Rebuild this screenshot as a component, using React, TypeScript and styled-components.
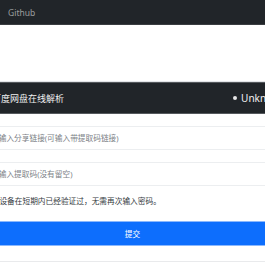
import React from "react";
import styled, { createGlobalStyle } from "styled-components";

const Global = createGlobalStyle`
  html, body { margin: 0; padding: 0; background: #fff; overflow: hidden; }
  body { font-family: "Noto Sans", "Noto Sans CJK SC", sans-serif; color: #212529; }
  * { box-sizing: border-box; }
`;

const Navbar = styled.nav`
  height: 25px;
  background: #212529;
  border-bottom: 1px solid #3a3d41;
  display: flex;
  align-items: center;
  padding: 0 8px;
`;

const NavLink = styled.a`
  color: rgba(255, 255, 255, 0.55);
  font-size: 8.5px;
  text-decoration: none;
`;

const Main = styled.main`
  padding-top: 56px;
`;

const Card = styled.section`
  width: calc(100% + 50px);
  margin-left: -25px;
  border: 1px solid #e3e5e8;
  border-radius: 4px;
`;

const CardHeader = styled.header`
  height: 32px;
  background: #212529;
  border: 1px solid #55595d;
  display: flex;
  align-items: center;
  justify-content: space-between;
  padding: 0 2px 0 15px;
  color: #fff;
`;

const Title = styled.h5`
  margin: 0;
  font-size: 9px;
  font-weight: 400;
  color: #f0f0f0;
`;

const Status = styled.span`
  display: flex;
  align-items: center;
  gap: 4px;
  font-size: 10px;
  color: #f2f2f2;
`;

const Dot = styled.span`
  width: 4px;
  height: 4px;
  border-radius: 50%;
  background: #e6e6e6;
`;

const Body = styled.div`
  padding: 12px 8px 15px;
  display: flex;
  flex-direction: column;
`;

const Input = styled.input<{ $gap?: number }>`
  height: 24px;
  border: 1px solid #eceef0;
  border-radius: 3px;
  padding: 0 6px;
  font-family: inherit;
  font-size: 7.7px;
  margin-bottom: ${(p) => p.$gap ?? 0}px;
  outline: none;
  &::placeholder { color: #7d8287; }
`;

const Hint = styled.p`
  margin: 0 0 13px;
  height: 14px;
  line-height: 14px;
  font-size: 7.7px;
  color: #343a40;
`;

const Button = styled.button`
  height: 25px;
  border: 1px solid #8bb8fd;
  border-radius: 3px;
  background: #0d6efd;
  color: #fff;
  font-family: inherit;
  font-size: 7.7px;
`;

const Footer = styled.div`
  border-top: 1px solid #e9eaec;
  height: 30px;
  background: #fff;
`;

export default function App() {
  return (
    <>
      <Global />
      <Navbar>
        <NavLink href="#">Github</NavLink>
      </Navbar>
      <Main>
        <Card>
          <CardHeader>
            <Title>百度网盘在线解析</Title>
            <Status>
              <Dot />
              Unknown
            </Status>
          </CardHeader>
          <Body>
            <Input $gap={12} placeholder="请输入分享链接(可输入带提取码链接)" />
            <Input $gap={8} placeholder="请输入提取码(没有留空)" />
            <Hint>您的设备在短期内已经验证过，无需再次输入密码。</Hint>
            <Button>提交</Button>
          </Body>
          <Footer />
        </Card>
      </Main>
    </>
  );
}
